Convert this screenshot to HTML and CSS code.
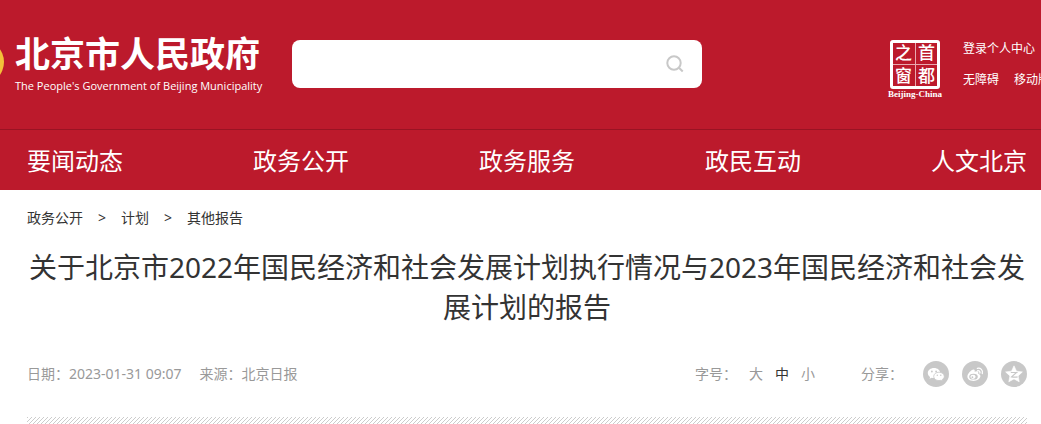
FILE: index.html
```html
<!DOCTYPE html>
<html lang="zh-CN">
<head>
    <meta charset="UTF-8">
    <meta name="viewport" content="width=device-width, initial-scale=1.0">
    <title>北京市人民政府</title>
    <link rel="stylesheet" href="styles.css">
</head>
<body>
    <header class="header">
        <div class="header-top">
            <a class="brand" href="#">
                <svg class="emblem" viewBox="0 0 44 44" aria-hidden="true">
                    <circle cx="22" cy="22" r="22" fill="#f3c13a"/>
                    <circle cx="22" cy="22" r="17" fill="#d8232a"/>
                    <path d="M22 9l3 9h9l-7 5 3 9-8-6-8 6 3-9-7-5h9z" fill="#f3c13a"/>
                </svg>
                <span class="brand-text">
                    <span class="brand-name">北京市人民政府</span>
                    <span class="brand-en">The People's Government of Beijing Municipality</span>
                </span>
            </a>

            <form class="search" role="search">
                <input type="text" class="search-input" aria-label="搜索">
                <button type="button" class="search-btn" aria-label="搜索">
                    <svg viewBox="0 0 18 18" width="18" height="18" fill="none" stroke="#c8c8c8" stroke-width="2">
                        <circle cx="8" cy="8" r="6.7"/>
                        <path d="M12.7 12.5l4 4"/>
                    </svg>
                </button>
            </form>

            <a class="seal" href="#">
                <span class="seal-box">
                    <span>之</span><span>首</span>
                    <span>窗</span><span>都</span>
                </span>
                <span class="seal-name">Beijing-China</span>
            </a>

            <div class="user-links">
                <a href="#">登录个人中心</a>
                <div class="user-row">
                    <a href="#">无障碍</a>
                    <a href="#">移动版</a>
                </div>
            </div>
        </div>

        <nav class="nav">
            <a href="#">要闻动态</a>
            <a href="#">政务公开</a>
            <a href="#">政务服务</a>
            <a href="#">政民互动</a>
            <a href="#">人文北京</a>
        </nav>
    </header>

    <main class="main">
        <div class="crumbs">
            <a href="#">政务公开</a>
            <span>&gt;</span>
            <a href="#">计划</a>
            <span>&gt;</span>
            <a href="#">其他报告</a>
        </div>

        <h1 class="title">关于北京市2022年国民经济和社会发展计划执行情况与2023年国民经济和社会发展计划的报告</h1>

        <div class="meta">
            <div class="meta-info">
                <span>日期：2023-01-31 09:07</span>
                <span>来源：北京日报</span>
            </div>
            <div class="font-size">
                <span>字号：</span>
                <button type="button">大</button>
                <button type="button" class="active">中</button>
                <button type="button">小</button>
            </div>
            <div class="share">
                <span class="share-label">分享：</span>
                <a href="#" aria-label="微信">
                    <svg viewBox="0 0 26 26" width="26" height="26">
                        <circle cx="13" cy="13" r="13" fill="#c8c8c8"/>
                        <path d="M11 7c-3.500 0-6.200 2.200-6.200 5 0 1.600.9 3 2.300 3.900l-.6 1.900 2.200-1.100c.8.200 1.500.3 2.300.3 3.500 0 6.200-2.200 6.200-5S14.500 7 11 7z" fill="#fff"/>
                        <path d="M16 11.200c-3 0-5.300 1.900-5.300 4.200s2.300 4.200 5.300 4.200c.7 0 1.300-.1 1.900-.3l1.800.9-.5-1.600c1.300-.8 2.100-1.900 2.100-3.200 0-2.300-2.400-4.200-5.300-4.200z" fill="#fff" stroke="#c8c8c8" stroke-width=".8"/>
                        <g fill="#c8c8c8">
                            <circle cx="8.900" cy="10.500" r=".9"/>
                            <circle cx="13.100" cy="10.500" r=".9"/>
                            <circle cx="14.300" cy="14.300" r=".7"/>
                            <circle cx="17.800" cy="14.300" r=".7"/>
                        </g>
                    </svg>
                </a>
                <a href="#" aria-label="微博">
                    <svg viewBox="0 0 26 26" width="26" height="26">
                        <circle cx="13" cy="13" r="13" fill="#c8c8c8"/>
                        <path d="M11.500 8.500c1.200-.2 1.500.9 1.100 2.200 1.800-.7 4-.8 3.700 1.200l-.2.800c1.400.4 2.300 1.200 2.300 2.400 0 2.600-3.300 4.900-7 4.900s-6-1.800-6-4.400c0-2.900 3.800-6.700 6.100-7.100z" fill="#fff"/>
                        <ellipse cx="11.500" cy="15.700" rx="4.300" ry="2.900" fill="#c8c8c8"/>
                        <ellipse cx="11" cy="15.800" rx="2.600" ry="2.100" fill="#fff"/>
                        <circle cx="10.400" cy="16.200" r=".9" fill="#c8c8c8"/>
                        <path d="M15.400 7.300c3.200-.7 5.800 1.900 4.900 5.200M15.700 9.600c1.600-.2 2.600 1 2.200 2.500" fill="none" stroke="#fff" stroke-width="1.300" stroke-linecap="round"/>
                    </svg>
                </a>
                <a href="#" aria-label="QQ空间">
                    <svg viewBox="0 0 26 26" width="26" height="26">
                        <circle cx="13" cy="13" r="13" fill="#c8c8c8"/>
                        <path d="M13 4.800l2.500 5.400 5.900.7-4.300 4 1.100 5.900-5.200-2.900-5.200 2.900 1.100-5.900-4.300-4 5.900-.7z" fill="#fff" stroke="#fff" stroke-width=".6" stroke-linejoin="round"/>
                        <path d="M9.800 11.500h5.800l-5 4.300c2 .4 4 .4 6 0" fill="none" stroke="#c8c8c8" stroke-width="1.200"/>
                    </svg>
                </a>
            </div>
        </div>

        <div class="divider"></div>
    </main>
</body>
</html>
```
FILE: styles.css
```css
* {
    box-sizing: border-box;
}

body {
    margin: 0;
    background: #fff;
    color: #333;
    font-family: "Noto Sans", "Noto Sans CJK SC", sans-serif;
    font-size: 14px;
    line-height: 20px;
    overflow: hidden;
}

a {
    color: inherit;
    text-decoration: none;
}

button {
    background: none;
    border: none;
    padding: 0;
    color: inherit;
    font: inherit;
    cursor: pointer;
}

.header {
    background: #bc1a2c;
    color: #fff;
    overflow: hidden;
}

.header-top {
    display: flex;
    align-items: flex-start;
    height: 129px;
    padding-top: 32px;
}

.brand {
    display: flex;
    flex: none;
    gap: 11px;
    width: 332px;
    margin-left: -40px;
}

.emblem {
    width: 44px;
    height: 44px;
    margin-top: 8px;
}

.brand-text {
    display: flex;
    flex-direction: column;
    white-space: nowrap;
}

.brand-name {
    font-size: 35px;
    font-weight: bold;
    line-height: 44px;
}

.brand-en {
    font-family: "Open Sans", sans-serif;
    font-size: 11px;
    line-height: 20px;
}

.search {
    display: flex;
    flex: 1;
    height: 48px;
    margin-top: 8px;
    padding-right: 18px;
    background: #fff;
    border-radius: 8px;
}

.search-input {
    flex: 1;
    min-width: 0;
    padding: 0 16px;
    background: none;
    border: none;
    outline: none;
    font: inherit;
}

.search-btn {
    display: flex;
    align-items: center;
}

.seal {
    display: flex;
    flex: none;
    flex-direction: column;
    align-items: center;
    width: 54px;
    margin: 8px 21px 0 186px;
}

.seal-box {
    display: grid;
    grid-template-columns: 1fr 1fr;
    grid-template-rows: 1fr 1fr;
    gap: 2px;
    width: 50px;
    height: 49px;
    border: 3px solid #fff;
    border-radius: 3px;
    background:
        linear-gradient(#e9a9b0, #e9a9b0) center / 1px 100% no-repeat,
        linear-gradient(#e9a9b0, #e9a9b0) center / 100% 1px no-repeat;
    font-size: 17px;
    font-weight: 500;
    line-height: 20px;
    text-align: center;
}

.seal-name {
    font-family: "Liberation Serif", serif;
    font-size: 9px;
    font-weight: bold;
    line-height: 10px;
    white-space: nowrap;
}

.user-links {
    flex: none;
    width: 78px;
    margin-top: 1px;
    font-size: 12px;
    line-height: 31px;
    white-space: nowrap;
}

.user-row {
    display: flex;
    gap: 15px;
}

.nav {
    display: flex;
    justify-content: space-between;
    padding: 1px 14px 0 27px;
    border-top: 1px solid #991323;
    font-size: 24px;
    line-height: 59px;
}

.main {
    padding: 18px 14px 0 27px;
}

.crumbs {
    display: flex;
    gap: 15px;
}

.title {
    margin: 19px 0 0;
    font-size: 28px;
    font-weight: normal;
    line-height: 40px;
    text-align: center;
}

.meta {
    display: flex;
    align-items: center;
    margin-top: 34px;
    color: #999;
}

.meta-info {
    display: flex;
    flex: 1;
    gap: 18px;
}

.font-size {
    display: flex;
    gap: 12px;
    margin-right: 46px;
}

.font-size .active {
    color: #333;
}

.share {
    display: flex;
    align-items: center;
    gap: 13px;
}

.share-label {
    margin-right: 7px;
}

.share svg {
    display: block;
}

.divider {
    height: 7px;
    margin-top: 30px;
    background: linear-gradient(135deg, #ccc 18%, #fff 18% 50%, #ccc 50% 68%, #fff 68%) 0 0 / 4px 4px;
}
```
